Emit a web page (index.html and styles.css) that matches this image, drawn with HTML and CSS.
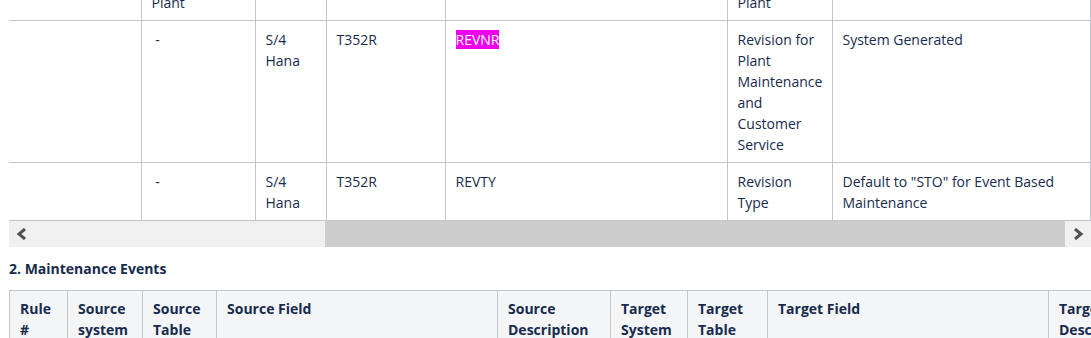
FILE: index.html
```html
<!DOCTYPE html>
<html lang="en">
<head>
<meta charset="utf-8">
<title>Maintenance mapping</title>
<link rel="stylesheet" href="styles.css">
</head>
<body>
<main class="page">
  <div class="table-wrap">
    <div class="table-scroll">
      <table class="grid grid-mapping">
        <colgroup>
          <col class="c-a"><col class="c-b"><col class="c-c"><col class="c-d">
          <col class="c-e"><col class="c-f"><col class="c-g">
        </colgroup>
        <tbody>
          <tr>
            <td></td>
            <td>Plant</td>
            <td></td>
            <td></td>
            <td></td>
            <td>Plant</td>
            <td></td>
          </tr>
          <tr>
            <td></td>
            <td>&nbsp;-</td>
            <td>S/4 Hana</td>
            <td>T352R</td>
            <td><span class="mark">REVNR</span></td>
            <td>Revision for Plant Maintenance and Customer Service</td>
            <td>System Generated</td>
          </tr>
          <tr>
            <td></td>
            <td>&nbsp;-</td>
            <td>S/4 Hana</td>
            <td>T352R</td>
            <td>REVTY</td>
            <td>Revision Type</td>
            <td>Default to "STO" for Event Based Maintenance</td>
          </tr>
        </tbody>
      </table>
    </div>
    <div class="hscroll">
      <div class="hscroll-btn hscroll-left">
        <svg width="12" height="12" viewBox="0 0 12 12"><polyline points="9,1 3,6 9,11" /></svg>
      </div>
      <div class="hscroll-track"><div class="hscroll-thumb"></div></div>
      <div class="hscroll-btn hscroll-right">
        <svg width="12" height="12" viewBox="0 0 12 12"><polyline points="3,1 9,6 3,11" /></svg>
      </div>
    </div>
  </div>

  <h3 class="section-title">2. Maintenance Events</h3>

  <div class="table-scroll">
    <table class="grid grid-events">
      <colgroup>
        <col class="e-1"><col class="e-2"><col class="e-3"><col class="e-4"><col class="e-5">
        <col class="e-6"><col class="e-7"><col class="e-8"><col class="e-9">
      </colgroup>
      <thead>
        <tr>
          <th>Rule #</th>
          <th>Source system</th>
          <th>Source Table</th>
          <th>Source Field</th>
          <th>Source Description</th>
          <th>Target System</th>
          <th>Target Table</th>
          <th>Target Field</th>
          <th>Target Description</th>
        </tr>
      </thead>
    </table>
  </div>
</main>
</body>
</html>
```

FILE: styles.css
```css
html, body {
  margin: 0;
  padding: 0;
  background: #ffffff;
  overflow: hidden;
}

body {
  font-family: "Open Sans", "Noto Sans", sans-serif;
  font-size: 14px;
  line-height: 21px;
  color: #172b4d;
}

/* page is scrolled down part-way through the first mapping table */
.page {
  padding-left: 9px;
  margin-top: -17px;
}

.table-scroll {
  width: 1082px;
  overflow: hidden;
}

.grid {
  border-collapse: collapse;
  table-layout: fixed;
}

.grid td,
.grid th {
  border: 1px solid #c1c7d0;
  vertical-align: top;
  text-align: left;
}

.grid td { padding: 8px 10px 7px; }
.grid th { padding: 7px 10px 8px; }

/* first table is scrolled to its right end, so its left edge is cut */
.grid-mapping { width: 1081px; }
.grid-mapping td:first-child { border-left: none; }
.c-a { width: 132px; }
.c-b { width: 114px; }
.c-c { width: 71px; }
.c-d { width: 119px; }
.c-e { width: 282px; }
.c-f { width: 105px; }
.c-g { width: 258px; }

.mark {
  background: #ee00ee;
  color: #ffffff;
}

/* horizontal scrollbar of the first table */
.hscroll {
  display: flex;
  height: 26px;
  width: 1082px;
  background: #f0f0f0;
}

.hscroll-btn {
  display: flex;
  align-items: center;
  justify-content: center;
  flex: none;
}

.hscroll-left { width: 25px; }
.hscroll-right { width: 26px; }

.hscroll-btn svg polyline {
  fill: none;
  stroke: #505050;
  stroke-width: 3;
  stroke-linejoin: miter;
}

.hscroll-track {
  flex: 1;
  display: flex;
  justify-content: flex-end;
}

.hscroll-thumb {
  width: 740px;
  background: #cdcdcd;
}

.section-title {
  margin: 11px 0 11px;
  font-size: 14px;
  line-height: 21px;
  font-weight: 700;
  color: #172b4d;
}

.grid-events { width: 1179px; }
.grid-events th {
  background: #f4f5f7;
  font-weight: 700;
  color: #172b4d;
}
.e-1 { width: 58px; }
.e-2 { width: 75px; }
.e-3 { width: 74px; }
.e-4 { width: 281px; }
.e-5 { width: 113px; }
.e-6 { width: 77px; }
.e-7 { width: 80px; }
.e-8 { width: 281px; }
.e-9 { width: 140px; }
```
